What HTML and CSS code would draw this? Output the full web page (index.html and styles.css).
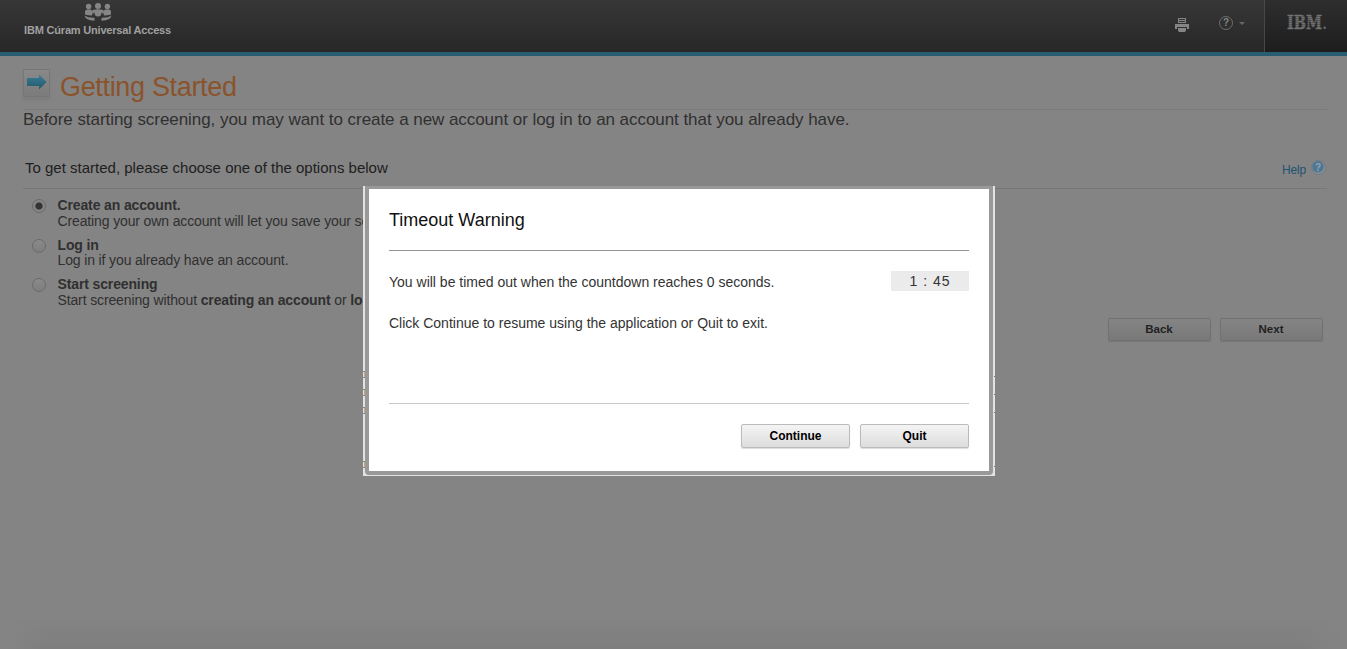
FILE: index.html
```html
<!DOCTYPE html>
<html lang="en">
<head>
<meta charset="utf-8">
<title>IBM Cúram Universal Access</title>
<link rel="stylesheet" href="styles.css">
</head>
<body>
<header class="topbar">
  <div class="brand">
    <svg class="people" width="28" height="19" viewBox="0 0 28 19" fill="#858585">
      <circle cx="4.600" cy="3.500" r="2.700"/><circle cx="14" cy="3" r="3"/><circle cx="23.400" cy="3.500" r="2.700"/>
      <path d="M1 11.500V9q0-2.500 2.500-2.500H7L9 9l-1 3.500Q4 12.500 1 11.500zM27 11.500V9q0-2.500-2.500-2.500H21L19 9l1 3.500Q24 12.500 27 11.500z"/>
      <path d="M8 8Q9 6.300 14 6.300T20 8L18.500 10.500Q14 5.500 9.500 10.500z"/>
      <circle cx="14" cy="10.300" r="3.300"/>
      <path d="M.5 12.500Q4 15 10.500 14.700V17.800Q1.500 17.500.5 12.500zM27.500 12.500Q24 15 17.500 14.700V17.800Q26.500 17.500 27.500 12.500z"/>
    </svg>
    <span class="brand-name">IBM Cúram Universal Access</span>
  </div>
  <div class="tools">
    <svg class="print" width="14" height="15" viewBox="0 0 14 15" fill="#858585">
      <path d="M3 0h8v5H3zM0 6h14v5h-2V9H2v2H0zM3 10h8v2.500L10 14H4l-1-1.500z"/>
      <path d="M4 1.500h6M4 3.500h6" stroke="#333"/>
    </svg>
    <span class="query">?</span>
    <span class="caret"></span>
  </div>
  <div class="ibm">
    <svg width="42" height="20" viewBox="0 0 42 20">
      <text class="ibm-text" x="1" y="16" textLength="35" lengthAdjust="spacingAndGlyphs">IBM</text>
      <path d="M0 3.500h37M0 5.500h37M0 7.500h37M0 9.500h37M0 11.500h37M0 13.500h37" stroke="#292929" stroke-width=".35"/>
      <circle cx="38.700" cy="14.700" r="1.300" fill="#686868"/>
    </svg>
  </div>
</header>
<main class="page">
  <div class="title-row">
    <span class="title-icon"><svg width="20" height="16" viewBox="0 0 20 16"><defs><linearGradient id="a" x2="0" y2="1"><stop stop-color="#397f99"/><stop offset="1" stop-color="#245767"/></linearGradient></defs><path d="M0 4h12V.5L19.700 8 12 15.500V12H0z" fill="url(#a)"/></svg></span>
    <h1>Getting Started</h1>
  </div>
  <p class="intro">Before starting screening, you may want to create a new account or log in to an account that you already have.</p>
  <div class="section-head">
    <h2>To get started, please choose one of the options below</h2>
    <a class="help">Help <svg width="15" height="15" viewBox="0 0 15 15"><circle cx="7.500" cy="7.500" r="6.900" fill="#8d9398" stroke="#6e7a82"/><circle cx="7" cy="6.800" r="5.800" fill="#4f7794"/><text class="help-mark" x="7" y="10.500" text-anchor="middle">?</text></svg></a>
  </div>
  <ul class="options">
    <li><i class="radio on"></i><div><b>Create an account.</b><p>Creating your own account will let you save your sc</p></div></li>
    <li><i class="radio"></i><div><b>Log in</b><p>Log in if you already have an account.</p></div></li>
    <li><i class="radio"></i><div><b>Start screening</b><p>Start screening without <b>creating an account</b> or <b>lo</b></p></div></li>
  </ul>
  <div class="nav"><span class="btn dim">Back</span><span class="btn dim">Next</span></div>
</main>
<div class="bottom-shade"></div>
<section class="dialog">
  <i class="tick t1"></i><i class="tick t2"></i><i class="tick t3"></i><i class="tick t4"></i>
  <div class="frame">
    <h3>Timeout Warning</h3>
    <div class="message">
      <div class="count-row"><span>You will be timed out when the countdown reaches 0 seconds.</span><span class="count">1 : 45</span></div>
      <p>Click Continue to resume using the application or Quit to exit.</p>
    </div>
    <div class="actions"><span class="btn">Continue</span><span class="btn">Quit</span></div>
  </div>
</section>
</body>
</html>
```
FILE: styles.css
```css
* { box-sizing: border-box; }
body { margin: 0; height: 649px; overflow: hidden; position: relative; background: #848484; color: #303030; font-family: "Liberation Sans", Arial, sans-serif; font-size: 14px; }
h1, h2, h3, p, ul { margin: 0; padding: 0; font-weight: normal; }
.topbar { height: 56px; display: flex; background: linear-gradient(#373737, #272727 52px); border-bottom: 4px solid #275c73; }
.brand { width: 147px; margin-left: 24px; padding-top: 3px; display: flex; flex-direction: column; align-items: center; }
.people { display: block; }
.brand-name { font-size: 11px; font-weight: bold; line-height: 13px; margin-top: 2px; color: #a0a0a0; white-space: nowrap; letter-spacing: -0.19px; }
.tools { margin-left: auto; width: 89px; display: flex; align-items: flex-start; }
.print { margin-top: 18px; }
.query { width: 14px; height: 14px; border: 1.5px solid #6d6d6d; border-radius: 50%; margin: 16px 0 0 30px; color: #858585; font-size: 10px; line-height: 12px; text-align: center; font-weight: bold; }
.caret { margin: 22px 0 0 6px; border: 3px solid transparent; border-top: 3px solid #666; border-bottom: 0; }
.ibm { width: 83px; border-left: 1px solid #484848; padding: 13px 0 0 21px; background: linear-gradient(#2e2e2e, #1d1d1d); }
.ibm svg { display: block; }
.ibm-text { font: bold 19px "DejaVu Serif", serif; fill: #727272; stroke: #727272; stroke-width: .5px; }
.page { padding: 0 20px 0 23px; }
.title-row { display: flex; height: 54px; border-bottom: 1px solid #7a7a7a; }
.title-icon { width: 27px; height: 28px; margin: 13px 0 0; border: 1px solid #777; background: linear-gradient(#898989, #7c7c7c); padding: 4px 0 0 3px; box-shadow: 0 3px 2px #7d7d7d; }
.title-icon svg { display: block; }
h1 { font-size: 27px; line-height: 32px; margin: 15px 0 0 10px; color: #8a532b; letter-spacing: -0.33px; }
.intro { font-size: 17px; line-height: 19px; color: #303030; white-space: nowrap; letter-spacing: -0.055px; }
.section-head { height: 60px; display: flex; justify-content: space-between; padding: 29px 1px 0 2px; border-bottom: 1px solid #777; }
h2 { font-size: 15px; line-height: 20px; color: #202020; }
.help { display: flex; gap: 5px; font-size: 12px; line-height: 24px; color: #20536f; letter-spacing: -0.2px; }
.help svg { margin-top: 2px; }
.help-mark { font: bold 10px "Liberation Sans", sans-serif; fill: #91a2ac; }
.options { list-style: none; padding: 9px 0 0 9px; height: 129px; width: 360px; }
.options li { display: flex; gap: 11.5px; height: 39.5px; line-height: 15px; white-space: nowrap; letter-spacing: -0.13px; }
.options p { position: relative; top: .5px; }
.radio { flex: none; width: 14px; height: 14px; margin-top: 1px; border: 1px solid #6a6a6a; border-radius: 50%; background: linear-gradient(#8a8a8a, #7e7e7e); }
.on { background: radial-gradient(circle, #333 0 3px, #858585 4.2px); }
.nav { display: flex; gap: 9px; justify-content: flex-end; padding-right: 4.5px; }
.btn { width: 109px; height: 24px; display: block; border: 1px solid #bbb; border-radius: 2px; background: linear-gradient(#f4f4f4, #ddd); color: #000; font-size: 12px; font-weight: bold; line-height: 22px; text-align: center; box-shadow: 0 1px 1px #ddd; }
.dim { width: 103px; height: 23px; border-color: #717171; background: linear-gradient(#848484, #797979); color: #222; line-height: 21px; box-shadow: 0 1px 1px #777; font-size: 11.5px; }
.bottom-shade { position: absolute; left: 8px; right: 8px; bottom: 0; height: 30px; background: linear-gradient(#84848400, #7e7e7e); -webkit-mask-image: linear-gradient(90deg, transparent, #000 40px calc(100% - 40px), transparent); }
.dialog { position: absolute; z-index: 0; left: 363px; top: 186px; width: 632px; height: 290px; padding: 0 2px 1px; }
.dialog::before { content: ""; position: absolute; inset: 0; background: #e2e2e2; z-index: -2; }
.frame { height: 289px; border: 4px solid #999; border-top-width: 3px; border-radius: 0 0 4px 4px; background: #fff; padding: 0 20px; color: #333; }
h3 { height: 62px; padding-top: 20px; font-size: 18px; line-height: 22px; color: #111; border-bottom: 1px solid #949494; }
.message { height: 153px; padding-top: 20px; border-bottom: 1px solid #c8c8c8; }
.count-row { display: flex; justify-content: space-between; line-height: 22px; }
.count { width: 78px; height: 20px; background: #ebebeb; text-align: center; line-height: 20px; letter-spacing: 1px; }
.message p { margin-top: 21px; line-height: 18px; }
.actions { display: flex; justify-content: flex-end; gap: 10px; padding-top: 20px; }
.tick { position: absolute; left: 0; width: 2px; height: 7px; border: solid #888; border-width: 1px 0; z-index: -1; }
.tick::before { content: ""; position: absolute; left: 1px; top: 0; width: 1px; height: 5px; background: #cda775; }
.tick::after { content: ""; position: absolute; left: 631px; top: 4px; width: 1px; height: 1px; background: #778; }
.t1 { top: 185px; }
.t2 { top: 203px; }
.t3 { top: 221px; }
.t4 { top: 275px; }
```
